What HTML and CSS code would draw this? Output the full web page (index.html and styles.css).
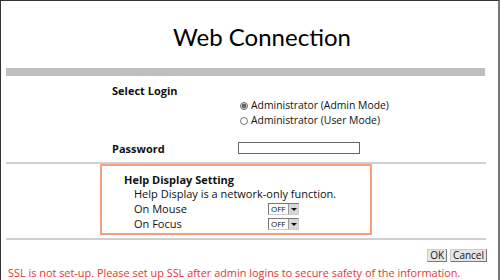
FILE: index.html
```html
<!DOCTYPE html>
<html lang="en">

<head>
    <meta charset="UTF-8">
    <title>Web Connection</title>
    <link rel="stylesheet" href="styles.css">
</head>

<body>
    <div class="frame">
        <h1 class="title">Web Connection</h1>
        <div class="bar"></div>

        <form class="login">
            <div class="row">
                <span class="label">Select Login</span>
            </div>
            <div class="choices">
                <label class="choice"><input type="radio" name="mode" checked>Administrator (Admin Mode)</label>
                <label class="choice"><input type="radio" name="mode">Administrator (User Mode)</label>
            </div>
            <div class="row pass">
                <span class="label">Password</span>
                <input type="password" class="pw">
            </div>
        </form>

        <div class="rule"></div>

        <div class="help">
            <h3 class="help-title">Help Display Setting</h3>
            <p class="help-note">Help Display is a network-only function.</p>
            <div class="help-row">
                <span class="help-name">On Mouse</span>
                <span class="sel">OFF<span class="arrow"></span></span>
            </div>
            <div class="help-row">
                <span class="help-name">On Focus</span>
                <span class="sel">OFF<span class="arrow"></span></span>
            </div>
        </div>

        <div class="rule rule-low"></div>

        <div class="actions">
            <button type="button" class="btn">OK</button>
            <button type="button" class="btn">Cancel</button>
        </div>

        <p class="warn">SSL is not set-up. Please set up SSL after admin logins to secure safety of the information.</p>
    </div>
</body>

</html>
```

FILE: styles.css
```css
html, body {
    margin: 0;
    height: 100%;
    background-color: #fff;
}

body {
    font-family: 'Open Sans', 'Liberation Sans', sans-serif;
    font-size: 11px;
    color: #111;
}

.frame {
    box-sizing: border-box;
    height: 100%;
    border-top: 1px solid #333;
    border-left: 1px solid #333;
    border-right: 2px solid #777;
    overflow: hidden;
}

.title {
    margin: 0;
    height: 67px;
    padding-top: 21px;
    padding-left: 25px;
    box-sizing: border-box;
    text-align: center;
    font-family: 'Lato', sans-serif;
    font-weight: 400;
    font-size: 24px;
    line-height: 30px;
    color: #000;
}

.bar {
    margin-left: 5px;
    width: 479px;
    height: 8px;
    background-color: #bfbfbf;
}

.login {
    margin: 0;
    padding-top: 7px;
}

.row {
    display: flex;
    align-items: center;
    height: 15px;
}

.label {
    width: 126px;
    margin-left: 111px;
    font-weight: bold;
}

.choices {
    display: flex;
    flex-direction: column;
    margin-left: 239px;
    font-size: 10.4px;
}

.choice {
    display: flex;
    align-items: center;
    height: 15px;
    line-height: 15px;
}

.choice input {
    width: 8px;
    height: 8px;
    margin: 0 3px 0 0;
    accent-color: #666;
}

.pass {
    margin-top: 13px;
    height: 14px;
}

.pw {
    width: 122px;
    height: 12px;
    padding: 0;
    border: 1px solid #666;
    box-sizing: border-box;
}

.rule {
    margin: 7px 0 0 5px;
    width: 480px;
    height: 2px;
    background-color: #d0d0d0;
}

.rule-low {
    margin-top: 0;
}

.help {
    margin: 0 0 3px 99px;
    width: 272px;
    height: 71px;
    box-sizing: border-box;
    border: 2px solid #f4a07f;
    padding: 6px 0 0 22px;
}

.help-title {
    margin: 0;
    font-size: 11px;
    font-weight: bold;
    line-height: 15px;
}

.help-note {
    margin: 0 0 0 10px;
    line-height: 14px;
}

.help-row {
    display: flex;
    align-items: center;
    margin-left: 10px;
    height: 15px;
}

.help-name {
    width: 134px;
}

.sel {
    display: inline-flex;
    align-items: center;
    height: 10px;
    border: 1px solid #777;
    border-right-color: #ccc;
    border-bottom-color: #ccc;
    font-size: 8px;
    line-height: 10px;
    padding-left: 2px;
    background: #fff;
}

.arrow {
    position: relative;
    margin-left: 3px;
    width: 9px;
    height: 10px;
    background: #d8d8d8;
    border-left: 1px solid #999;
}

.arrow::after {
    content: "";
    position: absolute;
    left: 2px;
    top: 4px;
    border-left: 3px solid transparent;
    border-right: 3px solid transparent;
    border-top: 3px solid #111;
}

.actions {
    display: flex;
    justify-content: flex-end;
    gap: 3px;
    margin: 9px 11px 0 0;
}

.btn {
    font-family: inherit;
    font-size: 10px;
    height: 13px;
    line-height: 9px;
    padding: 0 2px;
    border: 1px solid #777;
    border-top-color: #ccc;
    border-left-color: #ccc;
    background-color: #e6e6e6;
    color: #111;
}

.warn {
    margin: 3px 0 0 7px;
    line-height: 15px;
    font-size: 10.9px;
    color: #e8352f;
    white-space: nowrap;
}
```
